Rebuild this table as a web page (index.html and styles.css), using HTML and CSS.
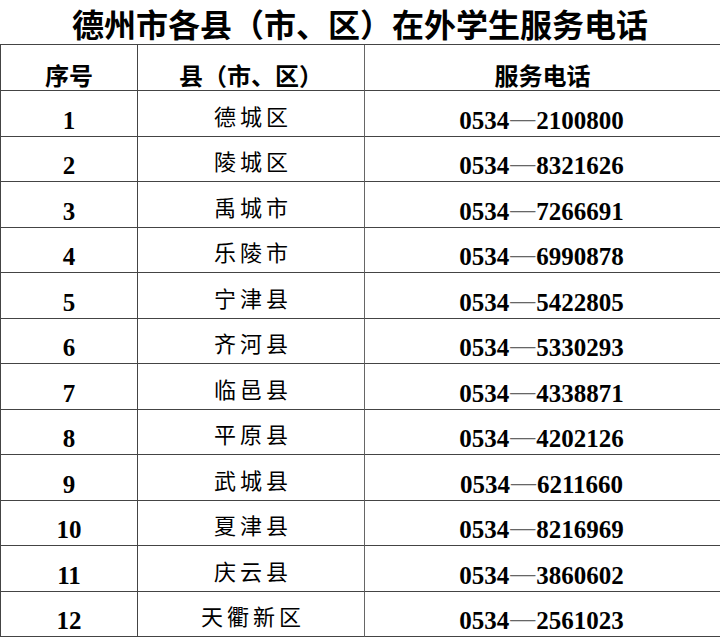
FILE: index.html
```html
<!DOCTYPE html>
<html lang="zh-CN">
<head>
<meta charset="utf-8">
<title>德州市各县（市、区）在外学生服务电话</title>
<link rel="stylesheet" href="styles.css">
</head>
<body>
<h1 class="title">德州市各县（市、区）在外学生服务电话</h1>
<div class="table">
  <div class="cell head">序号</div>
  <div class="cell head">县（市、区）</div>
  <div class="cell head">服务电话</div>

  <div class="cell num r-a">1</div><div class="cell name r-a">德城区</div><div class="cell tel r-a">0534<span class="dash">—</span>2100800</div>
  <div class="cell num r-b">2</div><div class="cell name r-b">陵城区</div><div class="cell tel r-b">0534<span class="dash">—</span>8321626</div>
  <div class="cell num r-a">3</div><div class="cell name r-a">禹城市</div><div class="cell tel r-a">0534<span class="dash">—</span>7266691</div>
  <div class="cell num r-b">4</div><div class="cell name r-b">乐陵市</div><div class="cell tel r-b">0534<span class="dash">—</span>6990878</div>
  <div class="cell num r-a">5</div><div class="cell name r-a">宁津县</div><div class="cell tel r-a">0534<span class="dash">—</span>5422805</div>
  <div class="cell num r-b">6</div><div class="cell name r-b">齐河县</div><div class="cell tel r-b">0534<span class="dash">—</span>5330293</div>
  <div class="cell num r-a">7</div><div class="cell name r-a">临邑县</div><div class="cell tel r-a">0534<span class="dash">—</span>4338871</div>
  <div class="cell num r-b">8</div><div class="cell name r-b">平原县</div><div class="cell tel r-b">0534<span class="dash">—</span>4202126</div>
  <div class="cell num r-a">9</div><div class="cell name r-a">武城县</div><div class="cell tel r-a">0534<span class="dash">—</span>6211660</div>
  <div class="cell num r-b">10</div><div class="cell name r-b">夏津县</div><div class="cell tel r-b">0534<span class="dash">—</span>8216969</div>
  <div class="cell num r-a">11</div><div class="cell name r-a">庆云县</div><div class="cell tel r-a">0534<span class="dash">—</span>3860602</div>
  <div class="cell num r-b">12</div><div class="cell name r-b">天衢新区</div><div class="cell tel r-b">0534<span class="dash">—</span>2561023</div>
</div>
</body>
</html>
```
FILE: styles.css
```css
* { box-sizing: border-box; }
html, body {
  margin: 0;
  padding: 0;
  background: #fff;
  color: #000;
  overflow: hidden;
}
.title {
  margin: 0;
  height: 44px;
  line-height: 44px;
  text-align: center;
  font-family: "Noto Sans CJK SC", sans-serif;
  font-weight: 700;
  font-size: 32px;
  padding-top: 1px;
}
.table {
  display: grid;
  grid-template-columns: 137px 227px 356px;
  border-top: 1px solid #444;
  border-left: 1px solid #444;
  width: 720px;
}
.cell {
  border-right: 1px solid #444;
  border-bottom: 1px solid #444;
  display: flex;
  justify-content: center;
  align-items: center;
  height: 46px;
  white-space: pre;
}
.cell:nth-child(3n+2) { border-right-color: #666; }
.r-b { height: 45px; }
.head {
  font-family: "Noto Sans CJK SC", sans-serif;
  font-weight: 700;
  font-size: 24px;
  line-height: 24px;
  padding-top: 14px;
}
.num, .tel {
  font-family: "Liberation Serif", "Times New Roman", serif;
  font-weight: 700;
  font-size: 25px;
  line-height: 25px;
  align-items: flex-end;
  padding-bottom: 3px;
}
.tel { padding-right: 2px; }
.dash {
  font-weight: 400;
  color: #666;
  padding: 0 1px;
  position: relative;
  top: -2px;
}
.name {
  font-family: "Noto Sans CJK SC", sans-serif;
  font-weight: 400;
  font-size: 22px;
  line-height: 22px;
  letter-spacing: 4px;
  padding-left: 4px;
  padding-top: 2px;
}
```
